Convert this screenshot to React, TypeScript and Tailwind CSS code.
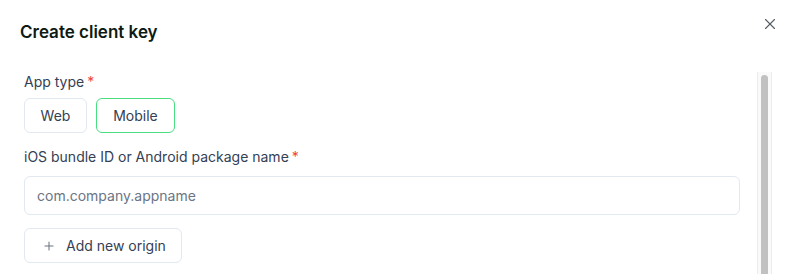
import { X, Plus } from 'lucide-react'

const Label = ({ text }: { text: string }) => (
  <div className="flex items-start text-sm leading-5 text-[#344054]">
    {text}
    <span className="ml-[3px] text-[#ef4444]">*</span>
  </div>
)

const App = () => {
  return (
    <div className="w-[789px] h-[274px] overflow-hidden bg-white font-['Inter',sans-serif]">
      <header className="flex items-start justify-between pl-5 pr-[10px] pt-[18px]">
        <h1 className="text-[17px] leading-7 font-semibold text-[#0d1a12]">Create client key</h1>
        <button className="mt-[-3px] text-[#555b63]">
          <X className="w-[18px] h-[18px]" strokeWidth={1.5} />
        </button>
      </header>

      <div className="flex mt-[26px] pr-[17px] h-[202px]">
        <div className="flex-1 pl-6 pr-[17px] flex flex-col">
          <Label text="App type" />
          <div className="flex gap-[9px] mt-[6px]">
            <button className="h-[35px] w-[63px] rounded-md border border-[#e2e8f0] text-sm text-[#344054]">Web</button>
            <button className="h-[35px] w-[79px] rounded-md border border-[#4ade80] text-sm text-[#344054]">Mobile</button>
          </div>

          <div className="mt-[14px]">
            <Label text="iOS bundle ID or Android package name" />
          </div>
          <input
            className="mt-[9px] h-[39px] w-full rounded-md border border-[#e2e8f0] px-3 text-sm text-[#344054] placeholder:text-[#6b7584] outline-none"
            placeholder="com.company.appname"
          />

          <button className="mt-[13px] h-[35px] w-[158px] rounded-md border border-[#e2e8f0] flex items-center pl-[17px] gap-[10px] text-sm text-[#344054]">
            <Plus className="w-[14px] h-[14px] text-[#6b7280]" strokeWidth={1.75} />
            Add new origin
          </button>
        </div>

        <div className="w-[15px] h-full border-x border-[#ececec] bg-[#fafafa] px-[3px] pt-[3px]">
          <div className="h-full w-full rounded-t-full bg-[#c1c1c1]" />
        </div>
      </div>
    </div>
  )
}

export default App
